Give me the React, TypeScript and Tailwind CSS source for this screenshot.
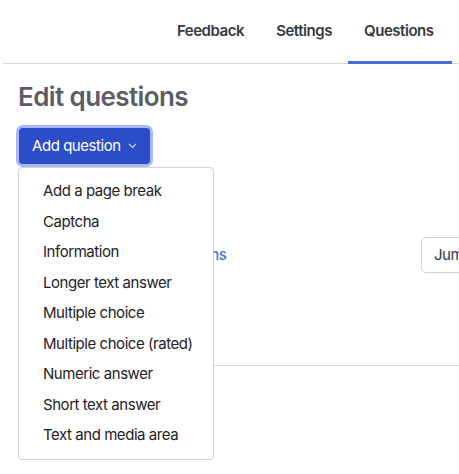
export default function App() {
  const items = ["Add a page break","Captcha","Information","Longer text answer","Multiple choice","Multiple choice (rated)","Numeric answer","Short text answer","Text and media area"];
  return (
    <div className="relative w-[459px] h-[474px] overflow-hidden bg-white text-[#1d2125] tracking-[-0.45px]" style={{fontFamily:"Inter, 'Noto Sans', sans-serif"}}>
      <div className="ml-[3px] flex justify-end h-[64px] border-b border-[#d8d9de]">
        <div className="flex items-stretch pr-[7px] text-[15px] font-semibold text-[#343a40]">
          <div className="px-[16px] flex items-center pb-[1px]">Feedback</div>
          <div className="px-[16px] flex items-center pb-[1px]">Settings</div>
          <div className="px-[16px] flex items-center pb-[1px] border-b-[3px] border-[#4d6fd6] mb-[-1px] pt-[3px] w-[104px]">Questions</div>
        </div>
      </div>
      <div className="px-[18px]">
        <h2 className="text-[26px] font-semibold text-[#5b5c66] mt-[17px] leading-[32px] tracking-[-0.6px]">Edit questions</h2>
        <div className="mt-[15px] inline-flex items-center gap-[7px] bg-[#2c4dc8] text-white text-[15px] rounded-[4px] px-[13px] h-[36px] ring-[3px] ring-[#a9b8ee] ml-[1px]">
          Add question
          <svg width="9" height="6" viewBox="0 0 9 6" fill="none" stroke="#c9d2f5" strokeWidth="1.2"><path d="M1 1l3.5 3.5L8 1"/></svg>
        </div>
        <div className="mt-[73px] flex items-center justify-between">
          <div className="pl-[140px] text-[15px] text-[#4a6fe0] font-medium">Questions</div>
          <div className="mr-[-60px] w-[80px] h-[36px] border border-[#ced1d6] rounded-[5px] flex items-center pl-[12px] text-[15px] text-[#343a40] whitespace-nowrap overflow-hidden">Jump to</div>
        </div>
        <div className="ml-[195px] mr-[-18px] mt-[92px] border-t border-[#d8d9de]"></div>
      </div>
      <div className="absolute left-[18px] top-[167px] w-[196px] bg-white border border-[#d0d2d7] rounded-[4px] py-[8px]">
        {items.map(t => (
          <div key={t} className="px-[24px] h-[30.5px] flex items-center text-[15px] text-[#1d2125] whitespace-nowrap">{t}</div>
        ))}
      </div>
    </div>
  );
}
